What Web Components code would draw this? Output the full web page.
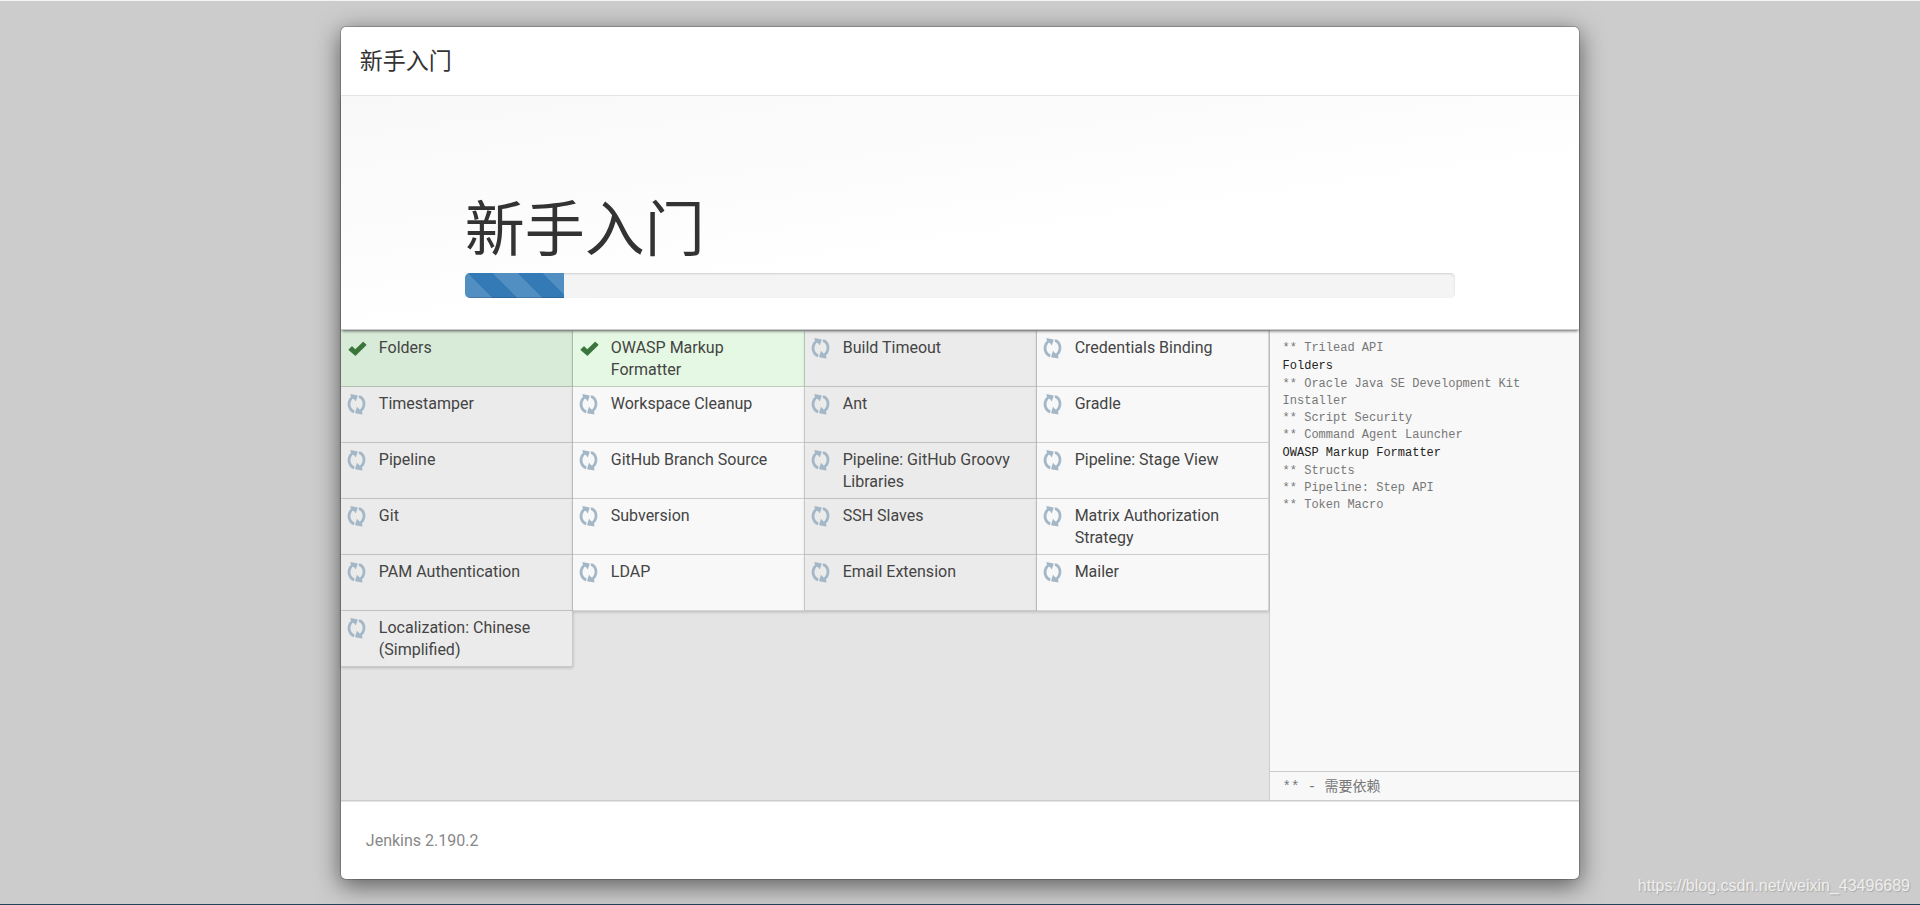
<!DOCTYPE html>
<html lang="zh-CN">
<head>
<meta charset="utf-8">
<title>新手入门</title>
<style>
html, body { margin: 0; }
body { background: #ccc; font-family: Roboto, "Noto Sans CJK SC", sans-serif; color: #333; }
</style>
</head>
<body>
<setup-page>
  <setup-dialog>
    <setup-header slot="header">新手入门</setup-header>
    <setup-hero slot="hero" value="10">新手入门</setup-hero>
    <plugin-grid slot="plugins" role="list"></plugin-grid>
    <install-log slot="log">
      <log-line dep>** Trilead API</log-line>
      <log-line>Folders</log-line>
      <log-line dep>** Oracle Java SE Development Kit Installer</log-line>
      <log-line dep>** Script Security</log-line>
      <log-line dep>** Command Agent Launcher</log-line>
      <log-line>OWASP Markup Formatter</log-line>
      <log-line dep>** Structs</log-line>
      <log-line dep>** Pipeline: Step API</log-line>
      <log-line dep>** Token Macro</log-line>
      <span slot="legend">** - 需要依赖</span>
    </install-log>
    <span slot="footer">Jenkins 2.190.2</span>
  </setup-dialog>
  <span slot="watermark">https://blog.csdn.net/weixin_43496689</span>
</setup-page>
<script>
const define = (name, markup, setup) => {
  const template = document.createElement('template');
  template.innerHTML = markup;
  customElements.define(name, class extends HTMLElement {
    constructor() {
      super();
      this.attachShadow({ mode: 'open' }).append(template.content.cloneNode(true));
    }
    connectedCallback() { if (setup) setup(this, this.shadowRoot); }
  });
};

define('setup-page', `
<style>
:host { display: flex; flex-direction: column; align-items: center; box-sizing: border-box; min-height: 100vh;
  padding: 25px 0 24px; border-top: 1px solid #f4f4f4; border-bottom: 1px solid #24445a; position: relative; }
::slotted(setup-dialog) { flex: 1; width: 64.6%; }
.mark { position: absolute; right: 10px; bottom: 8px; font: 16px/20px "Liberation Sans", Arial, sans-serif;
  color: #eee; text-shadow: 1px 1px 1px #aaa; }
</style>
<slot></slot><div class="mark"><slot name="watermark"></slot></div>`);

define('setup-dialog', `
<style>
:host { display: flex; flex-direction: column; box-sizing: border-box; min-width: 0; background: #fff;
  background-clip: padding-box; border: 1px solid rgba(0,0,0,.2); border-radius: 6px;
  box-shadow: 0 6px 24px rgba(0,0,0,.55); }
.body { flex: 1; display: grid; grid-template-columns: 3fr 1fr; background: #e4e4e4; border-bottom: 1px solid #ccc; }
footer { padding: 28px 25px 27px; font-size: 16px; line-height: 22px; color: #888; border-top: 1px solid #e5e5e5; }
</style>
<slot name="header"></slot><slot name="hero"></slot>
<div class="body"><slot name="plugins"></slot><slot name="log"></slot></div>
<footer><slot name="footer"></slot></footer>`);

define('setup-header', `
<style>
:host { display: block; padding: 19px 19px 17px; border-bottom: 1px solid #e5e5e5; }
h4 { margin: 0; font-size: 23px; line-height: 32px; font-weight: 400; }
</style>
<h4><slot></slot></h4>`);

define('setup-hero', `
<style>
:host { display: block; padding: 94px 10% 31px; position: relative; z-index: 1; border-bottom: 1px solid #ccc;
  background: linear-gradient(172deg, #f8f8f8, #fff 60%); box-shadow: 0 2px 3px -1px rgba(0,0,0,.6); }
h1 { margin: 0 0 2px; font-size: 60px; line-height: 81px; font-weight: 400; }
.track { height: 25px; border-radius: 5px; background: #f4f4f4; overflow: hidden;
  box-shadow: inset 0 1px 2px rgba(0,0,0,.15); }
.bar { height: 100%; background: linear-gradient(45deg, rgba(255,255,255,.15) 25%, transparent 25%, transparent 50%,
  rgba(255,255,255,.15) 50%, rgba(255,255,255,.15) 75%, transparent 75%) 28px 0 / 50px 50px #337ab7;
  box-shadow: inset 0 -1px 0 rgba(0,0,0,.15); }
</style>
<h1><slot></slot></h1>
<div class="track" role="progressbar" aria-valuemin="0" aria-valuemax="100"><div class="bar"></div></div>`,
(el, root) => {
  const value = el.getAttribute('value');
  root.querySelector('.track').setAttribute('aria-valuenow', value);
  root.querySelector('.bar').style.width = value + '%';
});

define('state-icon', `
<style>
:host { display: block; width: 20px; height: 24px; }
svg { display: block; }
.ok, :host([done]) .wait { display: none; }
:host([done]) .ok { display: block; }
</style>
<svg class="wait" width="20" height="24" viewBox="0 0 20 24" fill="none" stroke="#a3b7c6" stroke-width="2.8">
  <path d="M7.2 20.1C3.2 18 1.6 14.2 2.2 10.6C2.6 8.2 3.8 6.4 5.6 5"/>
  <path d="M12 4.2C15.8 6 17.4 9.6 16.9 13.2C16.5 15.6 15.4 17.3 13.8 18.8"/>
  <path d="M3.4 1.9L10.8 3.4L8.8 9.6L7.1 7.3L4 5.2ZM15.5 22.6L8.1 21.2L9.9 14.7L11.8 16.8L15 19.3Z" fill="#a3b7c6" stroke="none"/>
</svg>
<svg class="ok" width="20" height="24" viewBox="0 0 20 24" fill="#3a763b">
  <path d="M1.7 13.3L4.6 10.5Q5 10.2 5.4 10.5L8.3 13.2L15.8 5.9Q16.2 5.6 16.6 5.9L19.3 8.5Q19.7 8.9 19.3 9.3L8.9 19.5Q8.4 19.9 7.9 19.5L1.8 14.2Q1.4 13.7 1.7 13.3Z"/>
</svg>`);

define('plugin-tile', `
<style>
:host { display: flex; gap: 12px; box-sizing: border-box; padding: 6px 20px 5px 6px; font-size: 16px; line-height: 22px;
  background: #f8f8f8; color: #444; border: solid rgba(0,0,0,.14); border-width: 0 1px 1px 0;
  box-shadow: 0 1px 3px rgba(0,0,0,.2); }
:host([shade]) { background: #ebebeb; }
:host([done]) { background: #e4f8e3; }
:host([done][shade]) { background: #d8ebd8; }
state-icon { flex: none; margin-top: -1px; }
</style>
<state-icon></state-icon><span><slot></slot></span>`,
(el, root) => root.querySelector('state-icon').toggleAttribute('done', el.hasAttribute('done')));

define('plugin-grid', `
<style>
:host { display: grid; grid-template-columns: repeat(4, minmax(0, 1fr)); grid-auto-rows: minmax(56px, auto);
  align-content: start; padding-top: 1px; border-right: 1px solid #ccc; }
</style>`,
(el, root) => {
  const names = ['Folders', 'OWASP Markup Formatter', 'Build Timeout', 'Credentials Binding',
    'Timestamper', 'Workspace Cleanup', 'Ant', 'Gradle',
    'Pipeline', 'GitHub Branch Source', 'Pipeline: GitHub Groovy Libraries', 'Pipeline: Stage View',
    'Git', 'Subversion', 'SSH Slaves', 'Matrix Authorization Strategy',
    'PAM Authentication', 'LDAP', 'Email Extension', 'Mailer',
    'Localization: Chinese (Simplified)'];
  names.forEach((name, i) => {
    const tile = document.createElement('plugin-tile');
    tile.textContent = name;
    tile.setAttribute('role', 'listitem');
    tile.toggleAttribute('shade', i % 2 === 0);
    tile.toggleAttribute('done', i < 2);
    root.append(tile);
  });
});

define('log-line', `
<style>
:host { display: block; line-height: 19px; color: #222; }
:host([dep]) { line-height: 17px; color: #777; }
</style><slot></slot>`);

define('install-log', `
<style>
:host { display: flex; flex-direction: column; background: #f8f8f8;
  font-family: "Liberation Mono", "Noto Sans CJK SC", monospace; font-size: 12px; }
.lines { flex: 1; padding: 10px 13px; }
.legend { padding: 5px 13px 3px; line-height: 20px; color: #777; border-top: 1px solid #ccc; font-size: 14px; }
</style>
<div class="lines"><slot></slot></div><div class="legend"><slot name="legend"></slot></div>`);
</script>
</body>
</html>
